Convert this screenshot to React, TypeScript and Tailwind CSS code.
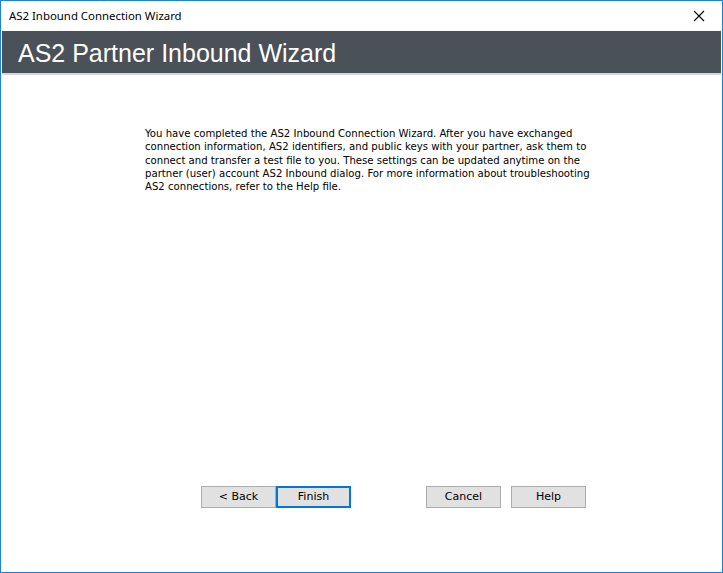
const BODY_LINES = [
  "You have completed the AS2 Inbound Connection Wizard. After you have exchanged",
  "connection information, AS2 identifiers, and public keys with your partner, ask them to",
  "connect and transfer a test file to you. These settings can be updated anytime on the",
  "partner (user) account AS2 Inbound dialog. For more information about troubleshooting",
  "AS2 connections, refer to the Help file.",
];

function WizardButton({
  label,
  primary,
}: {
  label: string;
  primary?: boolean;
}) {
  return (
    <button
      className={
        "h-[22px] w-[75px] bg-[#e1e1e1] text-[11px] text-black " +
        (primary
          ? "border-2 border-[#0078d7]"
          : "border border-[#adadad]")
      }
    >
      {label}
    </button>
  );
}

export default function App() {
  return (
    <div
      className="w-[723px] h-[573px] border border-[#1883d7] bg-white flex flex-col overflow-hidden"
      style={{ fontFamily: "Tahoma, 'DejaVu Sans', sans-serif" }}
    >
      {/* Title bar */}
      <div className="h-[30px] flex items-center justify-between pl-2 pr-[8px] shrink-0">
        <span
          className="text-[11.4px] text-black"
          style={{ fontFamily: "'Segoe UI', 'Noto Sans', sans-serif" }}
        >
          AS2 Inbound Connection Wizard
        </span>
        <svg width="30" height="30" viewBox="0 0 30 30">
          <path
            d="M10 10 L20 20 M20 10 L10 20"
            stroke="#000"
            strokeWidth="1.1"
            fill="none"
          />
        </svg>
      </div>

      {/* Header band */}
      <div className="h-[44px] bg-[#4a5158] border-b-2 border-[#d4d6d8] flex items-center pl-[16px] pt-[2px] shrink-0 mx-[1px]">
        <span
          className="text-white text-[25px] leading-none"
          style={{ fontFamily: "'Liberation Sans', Arial, sans-serif" }}
        >
          AS2 Partner Inbound Wizard
        </span>
      </div>

      {/* Body */}
      <div className="flex-1 flex flex-col">
        <div className="pt-[52px] pl-[144px]">
          <p
            className="text-[10.15px] leading-[13.3px] text-black"
            style={{ fontFamily: "'DejaVu Sans', Tahoma, sans-serif" }}
          >
            {BODY_LINES.map((l) => (
              <span key={l} className="block whitespace-nowrap">
                {l}
              </span>
            ))}
          </p>
        </div>

        <div className="mt-[293px] flex pl-[200px]">
          <div className="flex">
            <WizardButton label="< Back" />
            <WizardButton label="Finish" primary />
          </div>
          <div className="flex gap-[10px] ml-[75px]">
            <WizardButton label="Cancel" />
            <WizardButton label="Help" />
          </div>
        </div>
      </div>
    </div>
  );
}
